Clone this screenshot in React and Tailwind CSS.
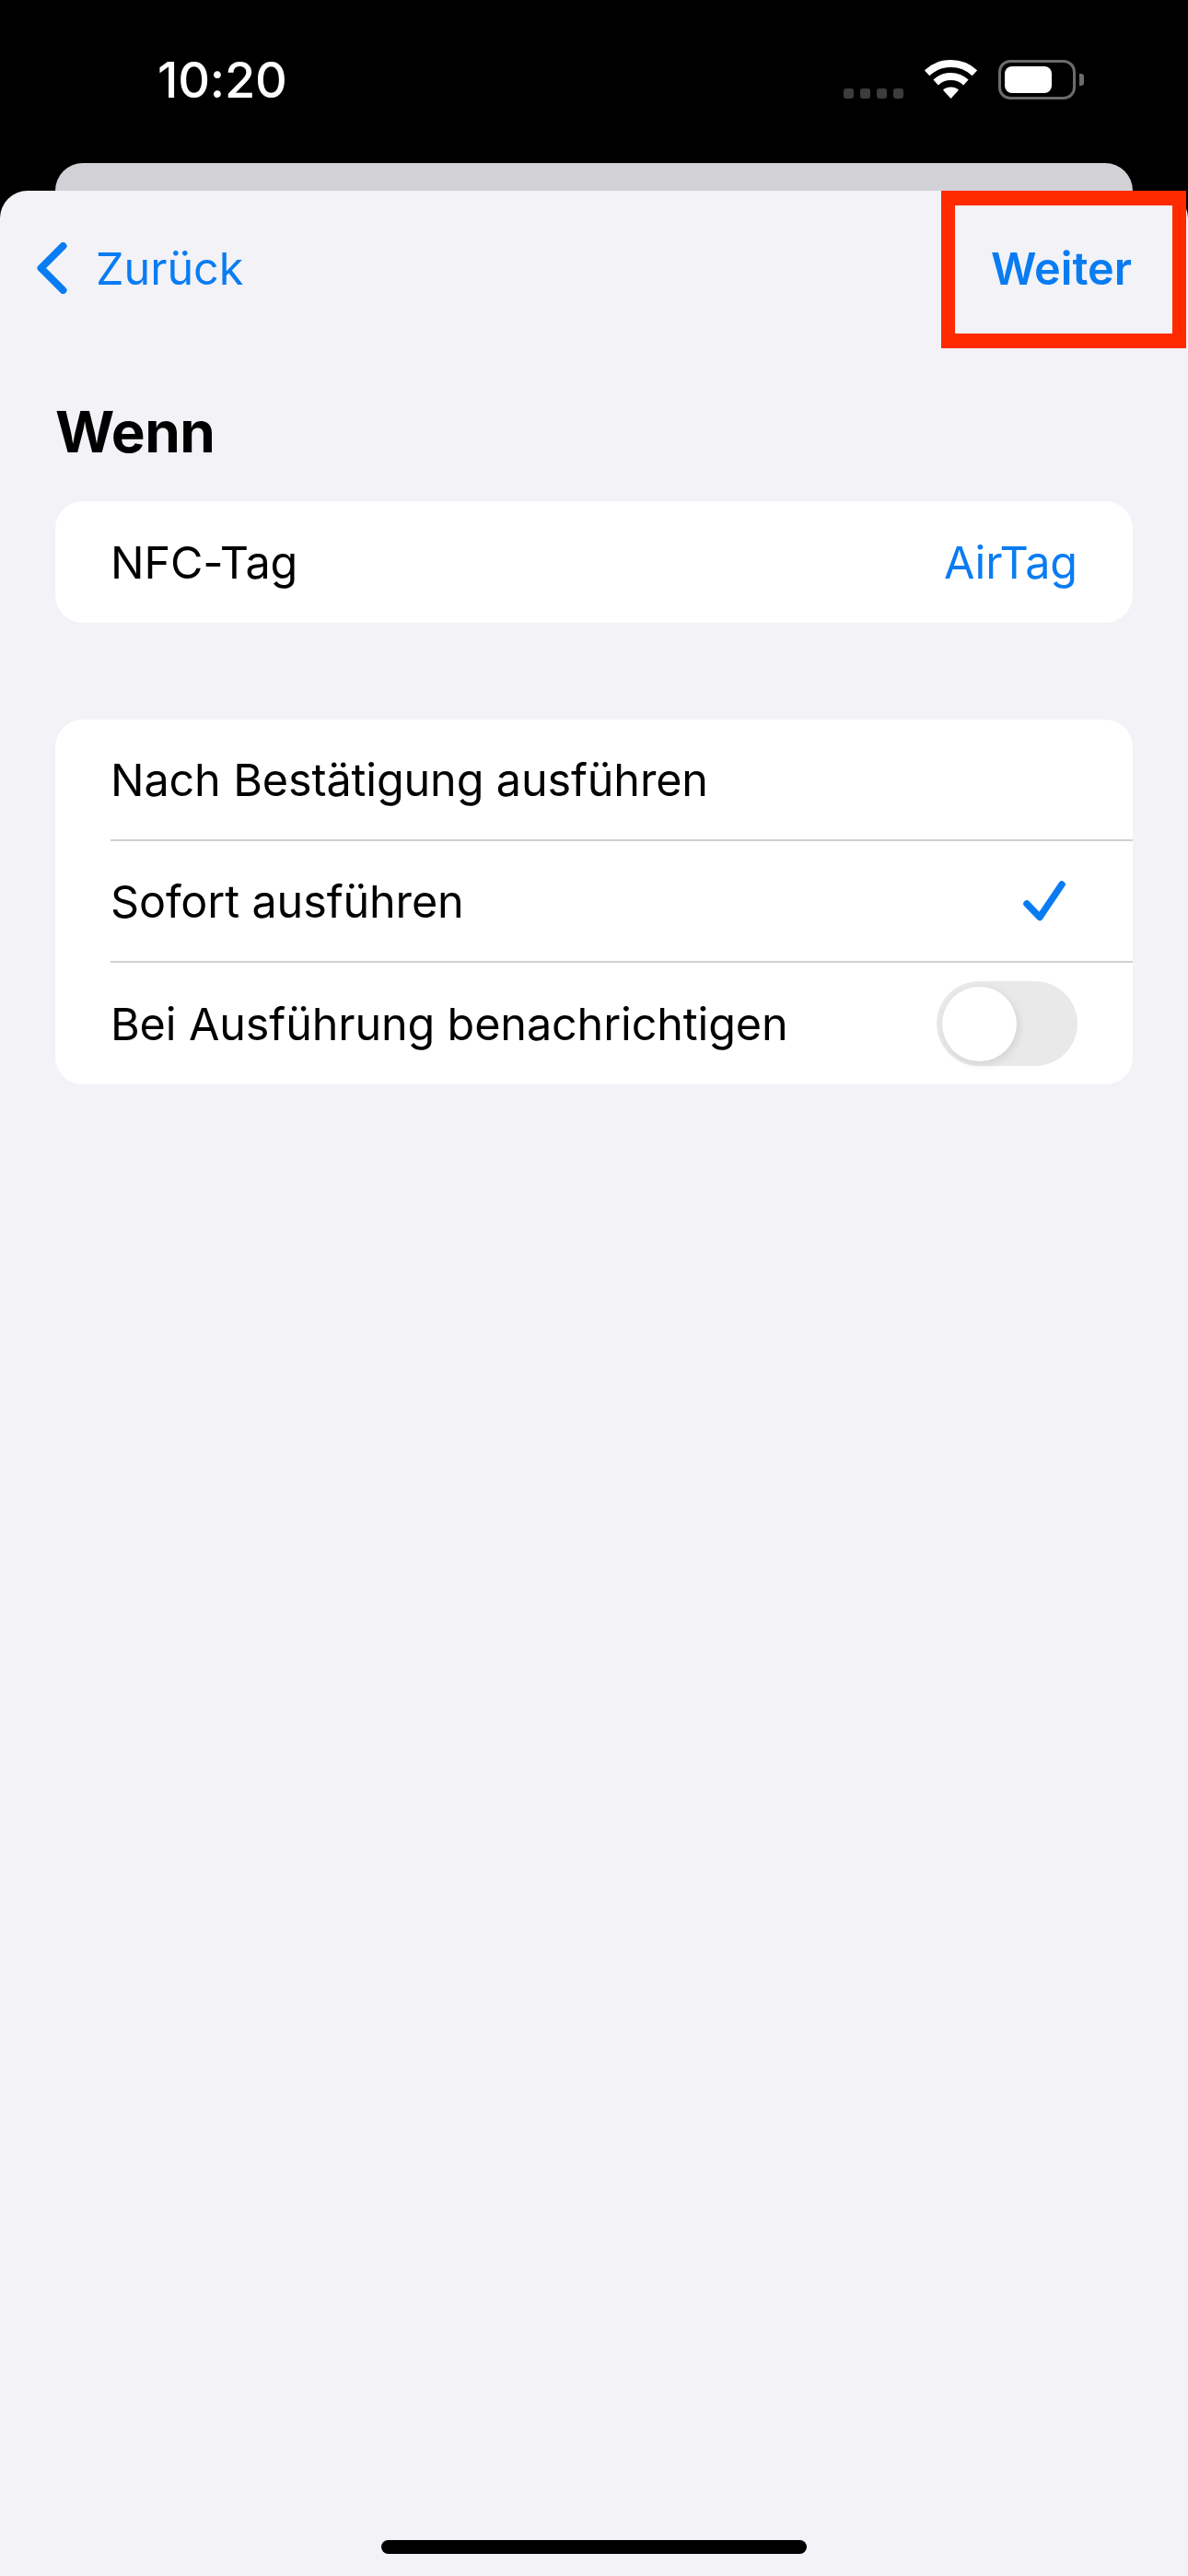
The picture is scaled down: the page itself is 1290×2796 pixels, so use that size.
import React from "react";

const font = "font-['Inter','Liberation_Sans',sans-serif]";

const Wifi = () => (
  <svg width="57" height="42" viewBox="0 0 57 42" fill="none">
    <path d="M2.6 14.2A38 38 0 0 1 54.4 14.2" stroke="#fff" strokeWidth="8" />
    <path d="M12.1 24.5A24 24 0 0 1 44.9 24.5" stroke="#fff" strokeWidth="8" />
    <path d="M28.5 42L20 32.8A12.5 12.5 0 0 1 37 32.8Z" fill="#fff" />
  </svg>
);

const Toggle = () => (
  <div className="flex h-[92px] w-[153px] items-center rounded-full bg-[#e9e9ea] pl-[6px]">
    <div className="h-[81px] w-[81px] rounded-full bg-white shadow-[2px_3px_10px_rgba(0,0,0,0.1)]" />
  </div>
);

const Row = ({ label, children, divider }) => (
  <div className={`ml-[60px] flex h-[132px] items-center justify-between pr-[60px] ${divider ? "border-b-2 border-[#d0d0d3]" : ""}`}>
    <span className="pt-[3px] text-[48.5px] tracking-[-0.12px] text-black">{label}</span>
    {children}
  </div>
);

export default function App() {
  return (
    <div className={`relative flex h-[2796px] w-[1290px] flex-col overflow-hidden bg-black ${font}`}>
      {/* Status bar */}
      <div className="flex h-[177px] items-start justify-between pl-[171px] pr-[113px] pt-[65px]">
        <span className="text-[54px] leading-[44px] font-medium tracking-[-0.2px] text-white">10:20</span>
        <div className="flex items-start gap-[23px]">
          <div className="mt-[31px] flex gap-[7px]">
            <div className="h-[11px] w-[11px] rounded-[3px] bg-[#3c3c3c]" />
            <div className="h-[11px] w-[11px] rounded-[3px] bg-[#3c3c3c]" />
            <div className="h-[11px] w-[11px] rounded-[3px] bg-[#3c3c3c]" />
            <div className="h-[11px] w-[11px] rounded-[3px] bg-[#3c3c3c]" />
          </div>
          <Wifi />
          <div className="flex items-center gap-[4px]">
            <div className="flex h-[43px] w-[84px] items-center rounded-[13px] border-[3px] border-[#6b6b6b] pl-[4px]">
              <div className="h-[29px] w-[51px] rounded-[8px] bg-white" />
            </div>
            <div className="h-[13px] w-[5px] rounded-r-[3px] bg-[#6b6b6b]" />
          </div>
        </div>
      </div>

      {/* Sheet behind */}
      <div className="mx-[60px] h-[30px] rounded-t-[30px] bg-[#d1d1d6]" />

      {/* Front sheet */}
      <div className="relative flex flex-1 flex-col rounded-t-[30px] bg-[#f2f2f7]">
        <div className="flex h-[168px] items-center justify-between pl-[40px] pr-[61px]">
          <div className="flex items-center gap-[31px]">
            <svg width="33" height="56" viewBox="0 0 33 56" fill="none">
              <path d="M28.5 4L4.5 28L28.5 52" stroke="#0a7cf2" strokeWidth="8" strokeLinecap="round" strokeLinejoin="round" />
            </svg>
            <span className="pt-[2px] text-[48.5px] tracking-[0px] text-[#0a7cf2]">Zurück</span>
          </div>
          <span className="pt-[2px] text-[48.5px] font-semibold tracking-[0px] text-[#0a7cf2]">Weiter</span>
        </div>

        <div className="flex h-[169px] items-start px-[60px] pt-[58px]">
          <h1 className="text-[62px] leading-[72px] font-bold tracking-[-0.5px] text-black">Wenn</h1>
        </div>

        <div className="mx-[60px] flex h-[132px] items-center justify-between rounded-[30px] bg-white px-[60px]">
          <span className="pt-[3px] text-[48.5px] tracking-[-0.12px] text-black">NFC-Tag</span>
          <span className="pt-[3px] text-[48.5px] tracking-[-0.12px] text-[#0a7cf2]">AirTag</span>
        </div>

        <div className="mx-[60px] mt-[105px] overflow-hidden rounded-[30px] bg-white">
          <Row label="Nach Bestätigung ausführen" divider />
          <Row label="Sofort ausführen" divider>
            <svg width="46" height="44" viewBox="0 0 46 44" fill="none" className="mr-[13px]">
              <path d="M4 25L18 39.5L42 4" stroke="#0a7cf2" strokeWidth="7.5" strokeLinecap="round" strokeLinejoin="round" />
            </svg>
          </Row>
          <Row label="Bei Ausführung benachrichtigen">
            <Toggle />
          </Row>
        </div>

        {/* Home indicator */}
        <div className="mx-auto mb-[24px] mt-auto h-[15px] w-[462px] rounded-full bg-black" />

        {/* Red annotation box */}
        <div className="absolute left-[1022px] top-0 h-[171px] w-[266px] border-x-[15px] border-y-[16px] border-[#ff2a00]" />
      </div>
    </div>
  );
}
